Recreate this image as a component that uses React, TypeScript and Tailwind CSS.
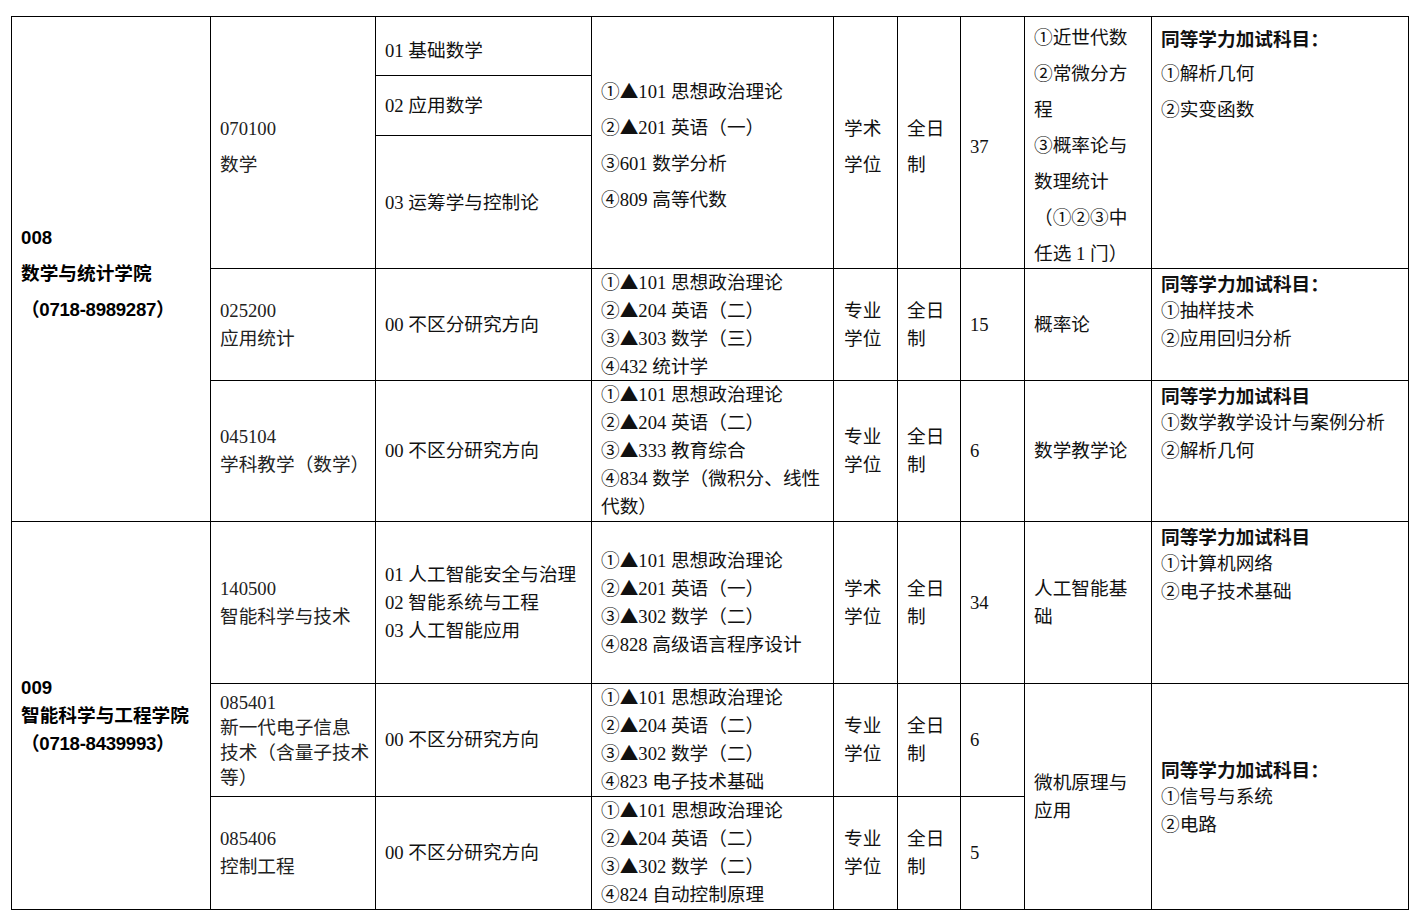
import React from 'react';

type CellProps = {
  pos: string;
  className?: string;
  children?: React.ReactNode;
};

// one grid cell, borders on the right and bottom only (the grid draws left/top)
const Cell = ({ pos, className = '', children }: CellProps) => (
  <div className={`flex flex-col border-r border-b border-black px-[9px] ${pos} ${className}`}>
    {children}
  </div>
);

// the ▲ mark is set in the CJK face so it is full width like the print
const withMarks = (t: string) =>
  t.split('▲').map((part, i) => (
    <React.Fragment key={i}>
      {i > 0 && <span className="font-['Noto_Sans_CJK_SC',sans-serif] leading-[0]">▲</span>}
      {part}
    </React.Fragment>
  ));

const Lines = ({ items }: { items: string[] }) => (
  <>
    {items.map((t, i) => (
      <span key={i} className="whitespace-nowrap">
        {withMarks(t)}
      </span>
    ))}
  </>
);

const Extra = ({ title, items }: { title: string; items: string[] }) => (
  <>
    <span className="whitespace-nowrap font-['Noto_Sans_CJK_SC',sans-serif] font-bold">{title}</span>
    <Lines items={items} />
  </>
);

const App = () => {
  return (
    <div className="min-h-screen w-full bg-white pl-[11px] pt-[16px] font-['Liberation_Serif','Noto_Sans_CJK_SC',serif] text-[18.67px] text-[#111]">
      <div className="grid w-fit grid-cols-[199px_165px_216px_242px_64px_63px_64px_127px_257px] grid-rows-[59px_60px_133px_112px_141px_162px_113px_113px] border-l border-t border-black">
        {/* 学院 */}
        <Cell pos="col-start-1 row-start-1 row-span-5" className="justify-center pt-[10px] leading-[36px] font-['Liberation_Sans','Noto_Sans_CJK_SC',sans-serif] font-bold text-black">
          <span>008</span>
          <span>数学与统计学院</span>
          <span className="tracking-[-0.3px]">（0718-8989287）</span>
        </Cell>
        <Cell pos="col-start-1 row-start-6 row-span-3" className="justify-center leading-[28px] font-['Liberation_Sans','Noto_Sans_CJK_SC',sans-serif] font-bold text-black">
          <span>009</span>
          <span>智能科学与工程学院</span>
          <span className="tracking-[-0.3px]">（0718-8439993）</span>
        </Cell>

        {/* 专业代码、名称 */}
        <Cell pos="col-start-2 row-start-1 row-span-3" className="justify-center pt-[9px] leading-[36px] text-[#222]">
          <Lines items={['070100', '数学']} />
        </Cell>
        <Cell pos="col-start-2 row-start-4" className="justify-center leading-[28px] text-[#222]">
          <Lines items={['025200', '应用统计']} />
        </Cell>
        <Cell pos="col-start-2 row-start-5" className="justify-center leading-[28px] text-[#222]">
          <Lines items={['045104', '学科教学（数学）']} />
        </Cell>
        <Cell pos="col-start-2 row-start-6" className="justify-center leading-[28px] text-[#222]">
          <Lines items={['140500', '智能科学与技术']} />
        </Cell>
        <Cell pos="col-start-2 row-start-7" className="justify-center leading-[25px] text-[#222]">
          <Lines items={['085401', '新一代电子信息', '技术（含量子技术', '等）']} />
        </Cell>
        <Cell pos="col-start-2 row-start-8" className="justify-center leading-[28px] text-[#222]">
          <Lines items={['085406', '控制工程']} />
        </Cell>

        {/* 研究方向 */}
        <Cell pos="col-start-3 row-start-1" className="justify-center pt-[10px] leading-[28px]">
          <Lines items={['01 基础数学']} />
        </Cell>
        <Cell pos="col-start-3 row-start-2" className="justify-center leading-[28px]">
          <Lines items={['02 应用数学']} />
        </Cell>
        <Cell pos="col-start-3 row-start-3" className="justify-center pt-[2px] leading-[28px]">
          <Lines items={['03 运筹学与控制论']} />
        </Cell>
        <Cell pos="col-start-3 row-start-4" className="justify-center leading-[28px]">
          <Lines items={['00 不区分研究方向']} />
        </Cell>
        <Cell pos="col-start-3 row-start-5" className="justify-center leading-[28px]">
          <Lines items={['00 不区分研究方向']} />
        </Cell>
        <Cell pos="col-start-3 row-start-6" className="justify-center leading-[28px]">
          <Lines items={['01 人工智能安全与治理', '02 智能系统与工程', '03 人工智能应用']} />
        </Cell>
        <Cell pos="col-start-3 row-start-7" className="justify-center leading-[28px]">
          <Lines items={['00 不区分研究方向']} />
        </Cell>
        <Cell pos="col-start-3 row-start-8" className="justify-center leading-[28px]">
          <Lines items={['00 不区分研究方向']} />
        </Cell>

        {/* 考试科目 */}
        <Cell pos="col-start-4 row-start-1 row-span-3" className="justify-center pt-[7px] leading-[36px]">
          <Lines items={['①▲101 思想政治理论', '②▲201 英语（一）', '③601 数学分析', '④809 高等代数']} />
        </Cell>
        <Cell pos="col-start-4 row-start-4" className="justify-center leading-[28px]">
          <Lines items={['①▲101 思想政治理论', '②▲204 英语（二）', '③▲303 数学（三）', '④432 统计学']} />
        </Cell>
        <Cell pos="col-start-4 row-start-5" className="justify-center leading-[28px]">
          <Lines items={['①▲101 思想政治理论', '②▲204 英语（二）', '③▲333 教育综合', '④834 数学（微积分、线性', '代数）']} />
        </Cell>
        <Cell pos="col-start-4 row-start-6" className="justify-center leading-[28px]">
          <Lines items={['①▲101 思想政治理论', '②▲201 英语（一）', '③▲302 数学（二）', '④828 高级语言程序设计']} />
        </Cell>
        <Cell pos="col-start-4 row-start-7" className="justify-center leading-[28px]">
          <Lines items={['①▲101 思想政治理论', '②▲204 英语（二）', '③▲302 数学（二）', '④823 电子技术基础']} />
        </Cell>
        <Cell pos="col-start-4 row-start-8" className="justify-center leading-[28px]">
          <Lines items={['①▲101 思想政治理论', '②▲204 英语（二）', '③▲302 数学（二）', '④824 自动控制原理']} />
        </Cell>

        {/* 学位类型 */}
        <Cell pos="col-start-5 row-start-1 row-span-3" className="justify-center pt-[9px] pl-[10px] leading-[36px]">
          <Lines items={['学术', '学位']} />
        </Cell>
        <Cell pos="col-start-5 row-start-4" className="justify-center pl-[10px] leading-[28px]">
          <Lines items={['专业', '学位']} />
        </Cell>
        <Cell pos="col-start-5 row-start-5" className="justify-center pl-[10px] leading-[28px]">
          <Lines items={['专业', '学位']} />
        </Cell>
        <Cell pos="col-start-5 row-start-6" className="justify-center pl-[10px] leading-[28px]">
          <Lines items={['学术', '学位']} />
        </Cell>
        <Cell pos="col-start-5 row-start-7" className="justify-center pl-[10px] leading-[28px]">
          <Lines items={['专业', '学位']} />
        </Cell>
        <Cell pos="col-start-5 row-start-8" className="justify-center pl-[10px] leading-[28px]">
          <Lines items={['专业', '学位']} />
        </Cell>

        {/* 学习方式 */}
        <Cell pos="col-start-6 row-start-1 row-span-3" className="justify-center pt-[9px] leading-[36px]">
          <Lines items={['全日', '制']} />
        </Cell>
        <Cell pos="col-start-6 row-start-4" className="justify-center leading-[28px]">
          <Lines items={['全日', '制']} />
        </Cell>
        <Cell pos="col-start-6 row-start-5" className="justify-center leading-[28px]">
          <Lines items={['全日', '制']} />
        </Cell>
        <Cell pos="col-start-6 row-start-6" className="justify-center leading-[28px]">
          <Lines items={['全日', '制']} />
        </Cell>
        <Cell pos="col-start-6 row-start-7" className="justify-center leading-[28px]">
          <Lines items={['全日', '制']} />
        </Cell>
        <Cell pos="col-start-6 row-start-8" className="justify-center leading-[28px]">
          <Lines items={['全日', '制']} />
        </Cell>

        {/* 拟招生人数 */}
        <Cell pos="col-start-7 row-start-1 row-span-3" className="justify-center pt-[9px] leading-[28px]">
          <span>37</span>
        </Cell>
        <Cell pos="col-start-7 row-start-4" className="justify-center leading-[28px]">
          <span>15</span>
        </Cell>
        <Cell pos="col-start-7 row-start-5" className="justify-center leading-[28px]">
          <span>6</span>
        </Cell>
        <Cell pos="col-start-7 row-start-6" className="justify-center leading-[28px]">
          <span>34</span>
        </Cell>
        <Cell pos="col-start-7 row-start-7" className="justify-center leading-[28px]">
          <span>6</span>
        </Cell>
        <Cell pos="col-start-7 row-start-8" className="justify-center leading-[28px]">
          <span>5</span>
        </Cell>

        {/* 复试科目 */}
        <Cell pos="col-start-8 row-start-1 row-span-3" className="justify-start pt-[3px] leading-[36px]">
          <Lines items={['①近世代数', '②常微分方', '程', '③概率论与', '数理统计', '（①②③中', '任选 1 门）']} />
        </Cell>
        <Cell pos="col-start-8 row-start-4" className="justify-center leading-[28px]">
          <Lines items={['概率论']} />
        </Cell>
        <Cell pos="col-start-8 row-start-5" className="justify-center leading-[28px]">
          <Lines items={['数学教学论']} />
        </Cell>
        <Cell pos="col-start-8 row-start-6" className="justify-center leading-[28px]">
          <Lines items={['人工智能基', '础']} />
        </Cell>
        <Cell pos="col-start-8 row-start-7 row-span-2" className="justify-center leading-[28px]">
          <Lines items={['微机原理与', '应用']} />
        </Cell>

        {/* 同等学力加试 */}
        <Cell pos="col-start-9 row-start-1 row-span-3" className="justify-start pt-[3px] leading-[36px]">
          <Extra title="同等学力加试科目：" items={['①解析几何', '②实变函数']} />
        </Cell>
        <Cell pos="col-start-9 row-start-4" className="justify-start leading-[28px]">
          <Extra title="同等学力加试科目：" items={['①抽样技术', '②应用回归分析']} />
        </Cell>
        <Cell pos="col-start-9 row-start-5" className="justify-start leading-[28px]">
          <Extra title="同等学力加试科目" items={['①数学教学设计与案例分析', '②解析几何']} />
        </Cell>
        <Cell pos="col-start-9 row-start-6" className="justify-start leading-[28px]">
          <Extra title="同等学力加试科目" items={['①计算机网络', '②电子技术基础']} />
        </Cell>
        <Cell pos="col-start-9 row-start-7 row-span-2" className="justify-center leading-[28px]">
          <Extra title="同等学力加试科目：" items={['①信号与系统', '②电路']} />
        </Cell>
      </div>
    </div>
  );
};

export default App;
